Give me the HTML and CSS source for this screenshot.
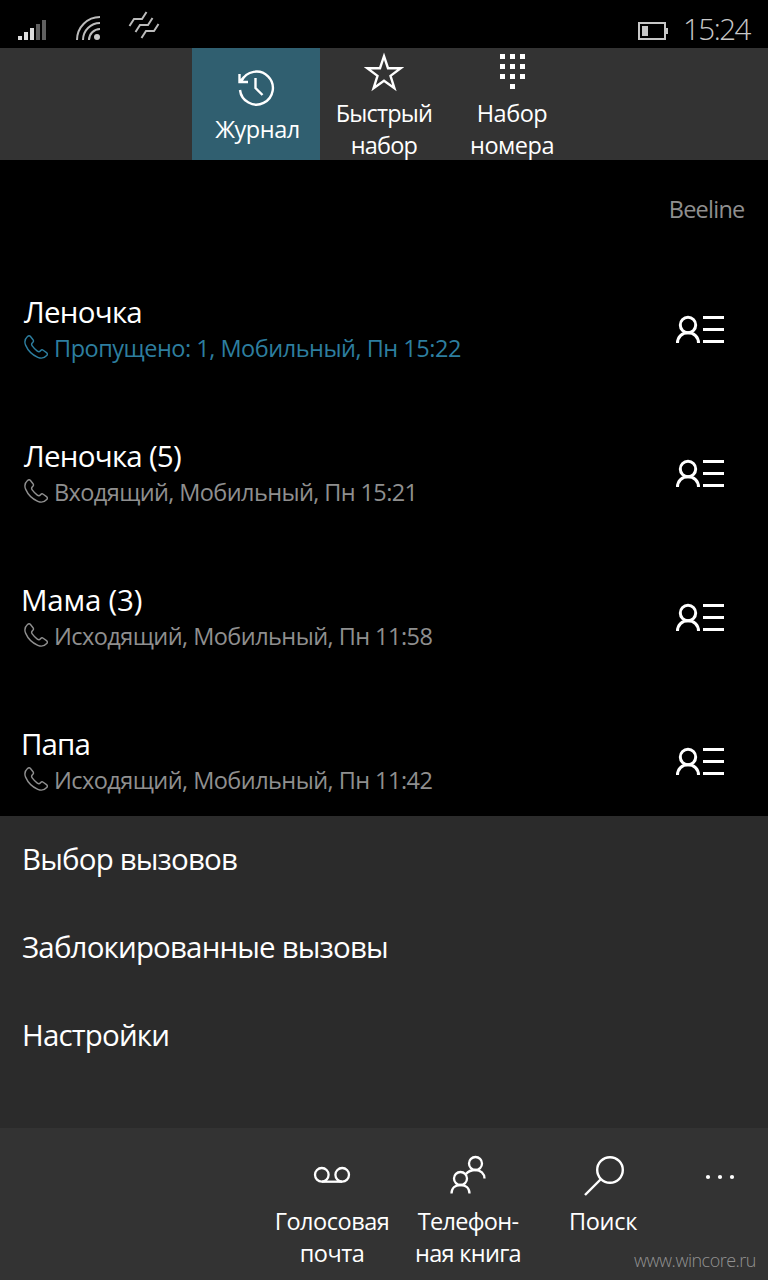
FILE: index.html
```html
<!DOCTYPE html>
<html lang="ru">
<head>
<meta charset="utf-8">
<title>Телефон</title>
<link rel="stylesheet" href="styles.css">
</head>
<body>
<svg width="0" height="0" class="defs">
  <symbol id="handset" viewBox="0 0 24 24"><path d="M3.5 1.6C4.6.6 5.6.5 6.5 1.5L9.200 5C9.800 6 9.500 6.900 8.600 7.600C7.200 8.700 7.300 9.600 8.200 10.900C9.700 13 11.400 14.700 13.300 16.100C14.500 17 15.500 17 16.500 15.800C17.300 14.800 18.200 14.500 19.200 15.200L22.500 17.600C23.600 18.500 23.700 19.400 22.700 20.500C20 23.600 17.700 23.900 13.800 22.300C8.500 20 3.800 15.200 1.600 10.100C0 6.300.5 4.300 3.500 1.600Z" fill="none" stroke="currentColor" stroke-width="1.400"/></symbol>
  <symbol id="contact" viewBox="0 0 48 30"><g fill="none" stroke="currentColor" stroke-width="3"><circle cx="12" cy="10" r="7.700"/><path d="M1.500 28C1.500 22 6 17.700 12 17.700S22.500 22 22.500 28M27 2.500H48M27 14.500H48M27 26.500H48"/></g></symbol>
</svg>
<div class="phone">
  <header class="status">
    <svg class="signals" width="200" height="48" viewBox="0 0 200 48">
      <path d="M18 36h4v4h-4zM24 32h4v8h-4zM30 28h4v12h-4z" fill="#dcdcdc"/>
      <path d="M36 24h4v16h-4zM42 20h4v20h-4z" fill="#606060"/>
      <g fill="none" stroke="#bcbcbc" stroke-width="2"><path d="M77 40A23 23 0 0 1 100 17M83 40A17 17 0 0 1 100 23M89 40A11 11 0 0 1 100 29"/><path d="M129.500 26L134 19H142L146.500 12M135.500 32L140 25H148L152.500 18M141.500 38L146 31H154L158.500 24"/></g>
      <circle cx="97" cy="37" r="3" fill="#c8c8c8"/>
    </svg>
    <svg class="battery" width="30" height="18" viewBox="0 0 30 18"><path d="M1 1H27V17H1Z" fill="none" stroke="#c8c8c8" stroke-width="2"/><path d="M4 4h6v10H4zM28 6h2v6h-2z" fill="#c8c8c8"/></svg>
    <span class="clock">15:24</span>
  </header>

  <nav class="tabs">
    <div class="tab tab-active">
      <svg width="38" height="38" viewBox="0 0 38 38"><g fill="none" stroke="#fff" stroke-width="2.400"><path d="M3 21A16.500 16.500 0 1 0 4.500 12M2.500 5V13H11M2.500 13L7 8M18.500 9V19L25.500 26"/></g></svg>
      <span class="label-history">Журнал</span>
    </div>
    <div class="tab tab-tall">
      <svg width="40" height="40" viewBox="0 0 40 40"><path d="M20 4.200L24 16.200H36.700L26.500 23.900L30.400 36.200L20 28.700L9.600 36.200L13.500 23.900L3.300 16.200H16Z" fill="none" stroke="#fff" stroke-width="2.400"/></svg>
      <span class="label-speed">Быстрый<br>набор</span>
    </div>
    <div class="tab tab-tall">
      <svg width="40" height="40" viewBox="0 0 40 40"><path d="M8 2h5v5H8zM18 2h5v5h-5zM28 2h5v5h-5zM8 12h5v5H8zM18 12h5v5h-5zM28 12h5v5h-5zM8 22h5v5H8zM18 22h5v5h-5zM28 22h5v5h-5zM18 32h5v5h-5z" fill="#fff"/></svg>
      <span>Набор<br>номера</span>
    </div>
  </nav>

  <main class="calls">
    <div class="operator">Beeline</div>
    <div class="call missed">
      <div class="info"><div class="name">Леночка</div><div class="detail"><svg><use href="#handset"/></svg><span>Пропущено: 1, Мобильный, Пн 15:22</span></div></div>
      <svg class="card"><use href="#contact"/></svg>
    </div>
    <div class="call">
      <div class="info"><div class="name">Леночка (5)</div><div class="detail"><svg><use href="#handset"/></svg><span class="incoming">Входящий, Мобильный, Пн 15:21</span></div></div>
      <svg class="card"><use href="#contact"/></svg>
    </div>
    <div class="call">
      <div class="info"><div class="name name-m">Мама (3)</div><div class="detail"><svg><use href="#handset"/></svg><span class="outgoing">Исходящий, Мобильный, Пн 11:58</span></div></div>
      <svg class="card"><use href="#contact"/></svg>
    </div>
    <div class="call">
      <div class="info"><div class="name name-p">Папа</div><div class="detail"><svg><use href="#handset"/></svg><span class="outgoing">Исходящий, Мобильный, Пн 11:42</span></div></div>
      <svg class="card"><use href="#contact"/></svg>
    </div>
  </main>

  <section class="menu">
    <div>Выбор вызовов</div>
    <div>Заблокированные вызовы</div>
    <div>Настройки</div>
  </section>

  <footer class="appbar">
    <div class="action">
      <svg width="40" height="44" viewBox="0 0 40 44"><g fill="none" stroke="#fff" stroke-width="2.300"><circle cx="9.800" cy="20.800" r="6.800"/><circle cx="30.200" cy="20.800" r="6.800"/><path d="M10 27.700H30"/></g></svg>
      <span>Голосовая<br>почта</span>
    </div>
    <div class="action">
      <svg width="40" height="44" viewBox="0 0 40 44"><g fill="none" stroke="#fff" stroke-width="2.300"><circle cx="27.500" cy="9.500" r="6.500"/><circle cx="12.500" cy="24.500" r="6.500"/><path d="M3.500 39.500C3.500 34 7.500 31 12.500 31S21.500 34 21.500 39.500M18 20C20 17.500 23.500 16 27.500 16C32.500 16 36.500 19.500 36.500 24.500"/></g></svg>
      <span class="label-book">Телефон-<br>ная книга</span>
    </div>
    <div class="action">
      <svg width="44" height="44" viewBox="0 0 44 44"><g fill="none" stroke="#fff" stroke-width="2.400"><circle cx="28" cy="16" r="12.800"/><path d="M19 25L3 41"/></g></svg>
      <span class="label-search">Поиск</span>
    </div>
    <div class="action more">
      <svg width="32" height="44" viewBox="0 0 32 44"><g fill="#fff"><circle cx="4" cy="23" r="2.100"/><circle cx="16" cy="23" r="2.100"/><circle cx="28" cy="23" r="2.100"/></g></svg>
    </div>
    <div class="watermark">www.wincore.ru</div>
  </footer>
</div>
</body>
</html>
```
FILE: styles.css
```css
* { box-sizing: border-box; }
body {
  margin: 0;
  background: #000;
  color: #fff;
  font: 23.5px/32px "Open Sans", "Noto Sans", sans-serif;
  letter-spacing: -0.48px;
}
svg { display: block; flex: none; }
.defs { position: absolute; }
.phone {
  width: 768px;
  height: 1280px;
  display: flex;
  flex-direction: column;
  overflow: hidden;
}
.status { height: 48px; display: flex; flex: none; }
.battery { margin: 22px 15px 0 438px; }
.clock {
  font-size: 29.5px;
  font-weight: 350;
  letter-spacing: -1.5px;
  line-height: 57px;
  height: 48px;
  color: #c8c8c8;
  white-space: nowrap;
}
.tabs {
  height: 112px;
  flex: none;
  display: flex;
  justify-content: center;
  background: #333;
}
.tab {
  width: 128px;
  display: flex;
  flex-direction: column;
  align-items: center;
  text-align: center;
  white-space: nowrap;
  padding-top: 21px;
}
.tab-active { background: #305f70; }
.tab-active svg { margin-bottom: 6px; }
.tab-tall { padding-top: 4px; }
.tab-tall svg { margin-bottom: 5px; }
.label-history { padding-left: 3px; }
.label-speed { letter-spacing: -0.8px; }
.calls { height: 656px; flex: none; overflow: hidden; }
.operator {
  height: 96px;
  padding: 33px 23.5px 0 0;
  text-align: right;
  letter-spacing: -0.75px;
  color: #8f8f8f;
}
.call {
  height: 144px;
  padding: 36px 44px 0 24px;
  display: flex;
  justify-content: space-between;
}
.info { white-space: nowrap; }
.name { font-size: 29.5px; line-height: 40px; letter-spacing: -0.75px; }
.name-m { margin-left: -3px; letter-spacing: -0.2px; }
.name-p { margin-left: -3px; letter-spacing: -0.9px; }
.detail { display: flex; gap: 6px; color: #8f8f8f; }
.detail svg { width: 24px; height: 24px; margin-top: 3px; }
.incoming { letter-spacing: -0.6px; }
.outgoing { letter-spacing: -0.55px; }
.missed .detail { color: #2d7e9f; }
.card { width: 48px; height: 30px; margin-top: 23px; }
.menu { height: 312px; flex: none; background: #2b2b2b; }
.menu div {
  height: 88px;
  padding: 0 22px 3px;
  font-size: 29.5px;
  line-height: 85px;
  letter-spacing: -0.84px;
}
.appbar {
  height: 152px;
  flex: none;
  position: relative;
  display: flex;
  padding-left: 264px;
  background: #333;
}
.action {
  width: 136px;
  padding-top: 26px;
  display: flex;
  flex-direction: column;
  align-items: center;
  text-align: center;
  white-space: nowrap;
}
.action svg { margin-bottom: 7px; }
.label-book { letter-spacing: -0.7px; }
.label-search { letter-spacing: -0.3px; padding-right: 2px; }
.more { width: 96px; }
.watermark {
  position: absolute;
  right: 12px;
  bottom: 8px;
  font-size: 18px;
  line-height: 24px;
  font-weight: 300;
  letter-spacing: -0.5px;
  color: #929292;
}
```
